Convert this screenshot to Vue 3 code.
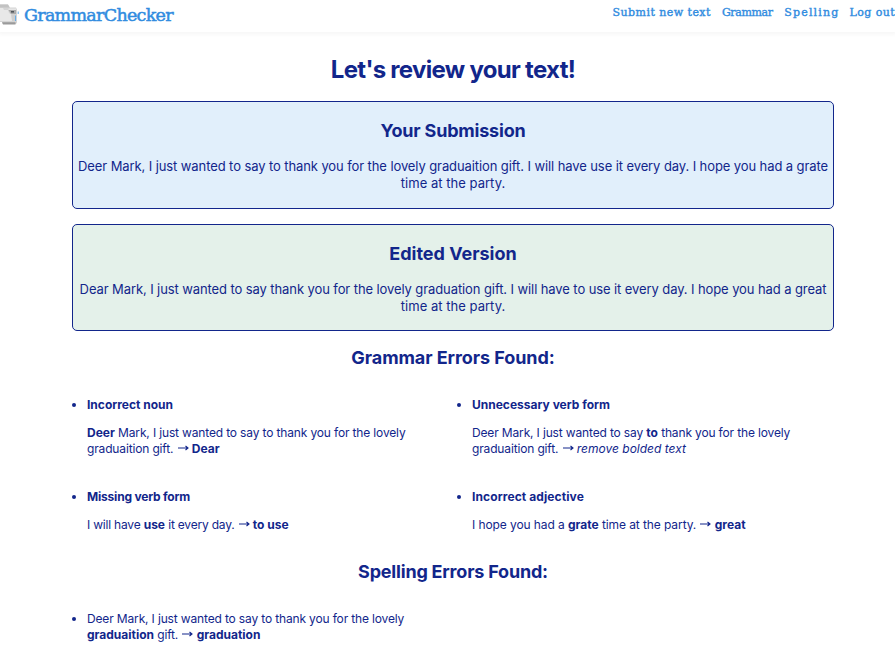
<script setup>
const links = [
  { label: 'Submit new text', cls: 'submit' },
  { label: 'Grammar', cls: 'grammar' },
  { label: 'Spelling', cls: 'spelling' },
  { label: 'Log out', cls: 'logout' },
]
</script>

<template>
  <div class="page">
    <header class="navbar">
      <a class="brand">
        <svg class="logo" width="20" height="26" viewBox="0 0 20 26">
          <path d="M0 4.500h8l2 3h6l1 2v13l-1 1.500H3l-1-2H0z" fill="#d4d4d4" />
          <path d="M0 4.500h8l1.500 3H0z" fill="#c2c2c2" />
          <path d="M0 8h3l1 2h4l1 3 3 2v6H0z" fill="#e8e8e8" />
          <path d="M8.500 8.500h7.500V10H8.500z" fill="#e6e6e6" />
          <path d="M8.500 10h7.500v4H11z" fill="#ababab" />
          <path d="M11 11h3v1.600h-3z" fill="#50565a" />
          <path d="M11 14.500h4V21h-3z" fill="#cfcfcf" />
          <path d="M2 22.200h13.500V24.500H3z" fill="#9a9a9a" />
          <path d="M15.500 15.500v5.500M18.200 11.500v2.500" stroke="#68aee6" stroke-width="1" />
        </svg>
        <span class="name">GrammarChecker</span>
      </a>
      <nav>
        <a v-for="l in links" :key="l.label" :class="l.cls">{{ l.label }}</a>
      </nav>
    </header>

    <main>
      <h1>Let's review your text!</h1>

      <section class="card blue">
        <h2>Your Submission</h2>
        <p>
          Deer Mark, I just wanted to say to thank you for the lovely graduaition gift. I will have use it every day. I hope you had a grate<br />
          <span class="tail">time at the party.</span>
        </p>
      </section>

      <section class="card green">
        <h2 class="t-edit">Edited Version</h2>
        <p>
          Dear Mark, I just wanted to say thank you for the lovely graduation gift. I will have to use it every day. I hope you had a great<br />
          <span class="tail">time at the party.</span>
        </p>
      </section>

      <h2 class="t-gram">Grammar Errors Found:</h2>
      <ul class="errors">
        <li>
          <b>Incorrect noun</b>
          <p><b>Deer</b> Mark, I just wanted to say to thank you for the lovely<br />graduaition gift. <svg class="arrow" viewBox="0 0 11 8"><path d="M0 4h10M7.500 2 10 4 7.500 6" /></svg> <b>Dear</b></p>
        </li>
        <li>
          <b>Unnecessary verb form</b>
          <p>Deer Mark, I just wanted to say <b>to</b> thank you for the lovely<br />graduaition gift. <svg class="arrow" viewBox="0 0 11 8"><path d="M0 4h10M7.500 2 10 4 7.500 6" /></svg> <i>remove bolded text</i></p>
        </li>
        <li>
          <b class="snug">Missing verb form</b>
          <p class="snug">I will have <b>use</b> it every day. <svg class="arrow" viewBox="0 0 11 8"><path d="M0 4h10M7.500 2 10 4 7.500 6" /></svg> <b>to use</b></p>
        </li>
        <li>
          <b class="wide">Incorrect adjective</b>
          <p class="wide">I hope you had a <b>grate</b> time at the party. <svg class="arrow" viewBox="0 0 11 8"><path d="M0 4h10M7.500 2 10 4 7.500 6" /></svg> <b>great</b></p>
        </li>
      </ul>

      <h2 class="t-spell">Spelling Errors Found:</h2>
      <ul class="errors">
        <li>
          <div>Deer Mark, I just wanted to say to thank you for the lovely<br /><b>graduaition</b> gift. <svg class="arrow" viewBox="0 0 11 8"><path d="M0 4h10M7.500 2 10 4 7.500 6" /></svg> <b>graduation</b></div>
        </li>
      </ul>
    </main>
  </div>
</template>

<style>
body {
  background: #fff;
  overflow: hidden;
}
</style>

<style scoped>
.page {
  height: 647px;
  overflow: hidden;
  color: #12268b;
  font-family: Inter, "Open Sans", sans-serif;
  white-space: nowrap;
}
.navbar {
  height: 32px;
  box-sizing: border-box;
  display: flex;
  justify-content: space-between;
  align-items: flex-start;
  box-shadow: 0 0 5px 2px rgba(0, 0, 0, 0.045);
  color: #318ce0;
  font-family: "DejaVu Serif", serif;
}
.brand {
  display: flex;
  gap: 4px;
}
.logo {
  display: block;
}
.name {
  font-size: 17.5px;
  line-height: 30px;
  letter-spacing: -0.72px;
  -webkit-text-stroke: 0.5px #318ce0;
}
nav {
  display: flex;
  font-size: 11px;
  line-height: 26px;
  -webkit-text-stroke: 0.4px #318ce0;
}
.submit {
  letter-spacing: 0.45px;
  margin-right: 11px;
}
.grammar {
  letter-spacing: -0.35px;
  margin-right: 11.5px;
}
.spelling {
  letter-spacing: 1.2px;
  margin-right: 10px;
}
.logout {
  letter-spacing: 0.4px;
}
main {
  width: 762px;
  margin-left: 72px;
}
h1 {
  margin: 22px 0 0;
  font-size: 24px;
  line-height: 32px;
  letter-spacing: -0.7px;
  text-align: center;
}
h2 {
  margin: 0;
  font-size: 18px;
  line-height: 24px;
  text-align: center;
  letter-spacing: -0.2px;
}
.card {
  box-sizing: border-box;
  border: 1px solid #12268b;
  border-radius: 5px;
  text-align: center;
}
.card h2 {
  padding-top: 17px;
}
.card .t-edit {
  letter-spacing: 0;
}
.card p {
  margin: 15px 0 0;
  font-size: 13px;
  line-height: 17px;
  letter-spacing: -0.095px;
}
.card .tail {
  letter-spacing: 0.03px;
}
.blue {
  height: 108px;
  margin-top: 15px;
  background: #e1effb;
}
.green {
  height: 107px;
  margin-top: 15px;
  background: #e4f1ea;
}
.t-gram {
  margin-top: 15px;
  letter-spacing: -0.07px;
}
.errors {
  margin: 27px 0 0;
  padding: 0;
  list-style: none;
  display: grid;
  grid-template-columns: 385px 370px;
  row-gap: 32px;
  font-size: 12px;
  line-height: 16px;
  letter-spacing: -0.15px;
}
.errors b,
.errors i {
  letter-spacing: 0;
}
.errors .snug {
  letter-spacing: -0.2px;
}
.errors p.wide {
  letter-spacing: -0.09px;
}
.errors b.wide {
  letter-spacing: 0.1px;
}
.errors li {
  position: relative;
  padding-left: 15px;
}
.errors li::before {
  content: "";
  position: absolute;
  left: 0;
  top: 6px;
  width: 4px;
  height: 4px;
  border-radius: 50%;
  background: #12268b;
}
.errors p {
  margin: 12px 0 0;
}
.arrow {
  display: inline-block;
  width: 11px;
  height: 8px;
  margin-left: 1px;
  vertical-align: 1px;
  fill: none;
  stroke: #12268b;
  stroke-width: 1.1;
}
.t-spell {
  margin-top: 27px;
}
</style>
